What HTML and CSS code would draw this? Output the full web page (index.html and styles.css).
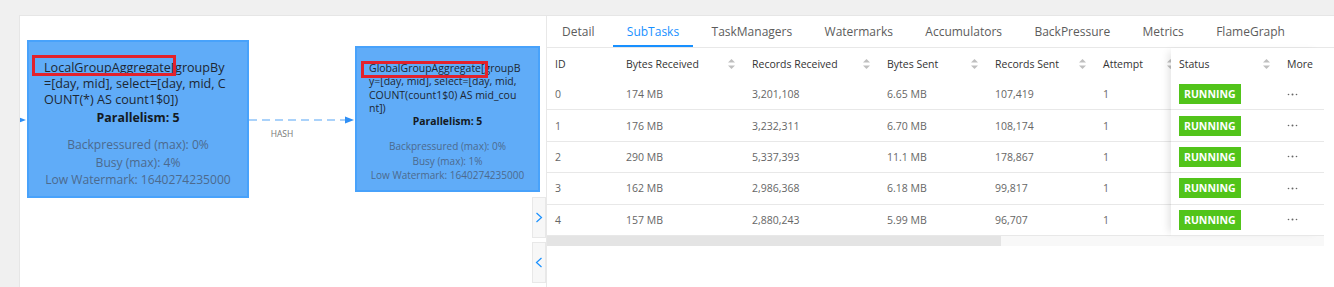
FILE: index.html
```html
<!DOCTYPE html>
<html lang="en">
<head>
    <meta charset="UTF-8">
    <meta name="viewport" content="width=device-width, initial-scale=1.0">
    <title>Job Vertex SubTasks</title>
    <link rel="stylesheet" href="styles.css">
</head>
<body>

    <div class="workspace">
        <div class="graph">
            <svg class="edges" width="526" height="271" viewBox="0 0 526 271">
                <line x1="0" y1="104" x2="3" y2="104" class="edge-line"/>
                <polygon points="-2,101 6,104 -2,107" class="edge-head"/>
                <line x1="229" y1="104" x2="326" y2="104" class="edge-line"/>
                <polygon points="325,100.5 334,104 325,107.5" class="edge-head"/>
                <text x="262" y="121" class="edge-label">HASH</text>
            </svg>

            <div class="node node-local">
                <p class="node-desc">LocalGroupAggregate[groupBy<br>=[day, mid], select=[day, mid, C<br>OUNT(*) AS count1$0])</p>
                <p class="node-para">Parallelism: 5</p>
                <p class="node-stats">Backpressured (max): 0%<br>Busy (max): 4%<br>Low Watermark: 1640274235000</p>
            </div>

            <div class="node node-global">
                <p class="node-desc">GlobalGroupAggregate[groupB<br>y=[day, mid], select=[day, mid,<br>COUNT(count1$0) AS mid_cou<br>nt])</p>
                <p class="node-para">Parallelism: 5</p>
                <p class="node-stats">Backpressured (max): 0%<br>Busy (max): 1%<br>Low Watermark: 1640274235000</p>
            </div>

            <!-- red highlight boxes drawn over the operator names -->
            <span class="mark mark-local"></span>
            <span class="mark mark-global"></span>

            <button class="toggle toggle-expand" type="button">
                <svg width="8" height="11" viewBox="0 0 8 11"><polyline points="1.5,1 6.5,5.5 1.5,10"/></svg>
            </button>
            <button class="toggle toggle-collapse" type="button">
                <svg width="8" height="11" viewBox="0 0 8 11"><polyline points="6.5,1 1.5,5.5 6.5,10"/></svg>
            </button>
        </div>

        <div class="panel">
            <nav class="tabs">
                <span class="tab">Detail</span>
                <span class="tab active">SubTasks</span>
                <span class="tab">TaskManagers</span>
                <span class="tab">Watermarks</span>
                <span class="tab">Accumulators</span>
                <span class="tab">BackPressure</span>
                <span class="tab">Metrics</span>
                <span class="tab">FlameGraph</span>
            </nav>

            <div class="table">
                <div class="table-main">
                    <div class="scroll-cols">
                        <div class="row head">
                            <div class="cell">ID</div>
                            <div class="cell">Bytes Received <svg class="sorter" viewBox="0 0 7 10"><polygon points="0,3.5 3.5,0 7,3.5"/><polygon points="0,6.5 7,6.5 3.5,10"/></svg></div>
                            <div class="cell">Records Received <svg class="sorter" viewBox="0 0 7 10"><polygon points="0,3.5 3.5,0 7,3.5"/><polygon points="0,6.5 7,6.5 3.5,10"/></svg></div>
                            <div class="cell">Bytes Sent <svg class="sorter" viewBox="0 0 7 10"><polygon points="0,3.5 3.5,0 7,3.5"/><polygon points="0,6.5 7,6.5 3.5,10"/></svg></div>
                            <div class="cell">Records Sent <svg class="sorter" viewBox="0 0 7 10"><polygon points="0,3.5 3.5,0 7,3.5"/><polygon points="0,6.5 7,6.5 3.5,10"/></svg></div>
                            <div class="cell">Attempt <svg class="sorter" viewBox="0 0 7 10"><polygon points="0,3.5 3.5,0 7,3.5"/><polygon points="0,6.5 7,6.5 3.5,10"/></svg></div>
                        </div>
                        <div class="row">
                            <div class="cell">0</div><div class="cell">174 MB</div><div class="cell">3,201,108</div><div class="cell">6.65 MB</div><div class="cell">107,419</div><div class="cell">1</div>
                        </div>
                        <div class="row">
                            <div class="cell">1</div><div class="cell">176 MB</div><div class="cell">3,232,311</div><div class="cell">6.70 MB</div><div class="cell">108,174</div><div class="cell">1</div>
                        </div>
                        <div class="row">
                            <div class="cell">2</div><div class="cell">290 MB</div><div class="cell">5,337,393</div><div class="cell">11.1 MB</div><div class="cell">178,867</div><div class="cell">1</div>
                        </div>
                        <div class="row">
                            <div class="cell">3</div><div class="cell">162 MB</div><div class="cell">2,986,368</div><div class="cell">6.18 MB</div><div class="cell">99,817</div><div class="cell">1</div>
                        </div>
                        <div class="row">
                            <div class="cell">4</div><div class="cell">157 MB</div><div class="cell">2,880,243</div><div class="cell">5.99 MB</div><div class="cell">96,707</div><div class="cell">1</div>
                        </div>
                    </div>

                    <div class="fixed-cols">
                        <div class="row head">
                            <div class="cell">Status <svg class="sorter" viewBox="0 0 7 10"><polygon points="0,3.5 3.5,0 7,3.5"/><polygon points="0,6.5 7,6.5 3.5,10"/></svg></div>
                            <div class="cell">More</div>
                        </div>
                        <div class="row"><div class="cell"><span class="badge">RUNNING</span></div><div class="cell"><svg class="more" viewBox="0 0 11 3"><circle cx="1.5" cy="1.5" r="0.8"/><circle cx="5.5" cy="1.5" r="1"/><circle cx="9.5" cy="1.5" r="0.8"/></svg></div></div>
                        <div class="row"><div class="cell"><span class="badge">RUNNING</span></div><div class="cell"><svg class="more" viewBox="0 0 11 3"><circle cx="1.5" cy="1.5" r="0.8"/><circle cx="5.5" cy="1.5" r="1"/><circle cx="9.5" cy="1.5" r="0.8"/></svg></div></div>
                        <div class="row"><div class="cell"><span class="badge">RUNNING</span></div><div class="cell"><svg class="more" viewBox="0 0 11 3"><circle cx="1.5" cy="1.5" r="0.8"/><circle cx="5.5" cy="1.5" r="1"/><circle cx="9.5" cy="1.5" r="0.8"/></svg></div></div>
                        <div class="row"><div class="cell"><span class="badge">RUNNING</span></div><div class="cell"><svg class="more" viewBox="0 0 11 3"><circle cx="1.5" cy="1.5" r="0.8"/><circle cx="5.5" cy="1.5" r="1"/><circle cx="9.5" cy="1.5" r="0.8"/></svg></div></div>
                        <div class="row"><div class="cell"><span class="badge">RUNNING</span></div><div class="cell"><svg class="more" viewBox="0 0 11 3"><circle cx="1.5" cy="1.5" r="0.8"/><circle cx="5.5" cy="1.5" r="1"/><circle cx="9.5" cy="1.5" r="0.8"/></svg></div></div>
                    </div>
                </div>

                <div class="hscroll"><div class="thumb"></div></div>
            </div>
        </div>
    </div>

</body>
</html>
```

FILE: styles.css
```css
/* job graph + subtask table */
body {
    margin: 0;
    height: 287px;
    overflow: hidden;
    background-color: #f0f0f0;
    font-family: "Open Sans", "Noto Sans", sans-serif;
}

p {
    margin: 0;
}

.workspace {
    display: flex;
    height: 271px;
    margin: 15px 0 0 19px;
    border-top: 1px solid #e6e6e6;
    border-left: 1px solid #e6e6e6;
    background-color: #fff;
}

/* ---- graph canvas ---- */
.graph {
    position: relative;
    flex: none;
    width: 526px;
    overflow: hidden;
}

.edges {
    position: absolute;
    left: 0;
    top: 0;
}

.edge-line {
    stroke: #8ec4f9;
    stroke-width: 1.5;
    stroke-dasharray: 8 5;
}

.edge-head {
    fill: #2f8ff5;
}

.edge-label {
    font-family: "Open Sans", sans-serif;
    font-size: 8.5px;
    fill: #777;
    text-anchor: middle;
}

.node {
    position: absolute;
    box-sizing: border-box;
    background-color: #60acf8;
    border: 2px solid #48a2fb;
    color: #1d2733;
}

.node-local {
    left: 7px;
    top: 24px;
    width: 222px;
    height: 158px;
    padding: 18px 10px 0 15px;
}

.node-global {
    left: 335px;
    top: 30px;
    width: 185px;
    height: 146px;
    padding: 14px 8px 0 12px;
}

.node-desc {
    font-size: 12.6px;
    line-height: 16px;
}

.node-para {
    font-size: 12.4px;
    line-height: 16px;
    font-weight: 700;
    text-align: center;
    color: #141a22;
    margin-top: 2px;
    margin-left: -5px;
}

.node-stats {
    font-size: 12.1px;
    line-height: 17.5px;
    text-align: center;
    color: #4c6a8e;
    margin-top: 10px;
    margin-left: -5px;
}

.node-global .node-desc {
    font-size: 10.5px;
    line-height: 13.3px;
}

.node-global .node-para {
    font-size: 10.4px;
    line-height: 13.3px;
    margin-top: 0;
    margin-left: -4px;
}

.node-global .node-stats {
    font-size: 10px;
    line-height: 14.3px;
    margin-top: 11px;
    margin-left: -4px;
}

.mark {
    position: absolute;
    box-sizing: border-box;
    border: 3px solid #e3222c;
}

.mark-local {
    left: 12px;
    top: 39px;
    width: 144px;
    height: 21px;
}

.mark-global {
    left: 341px;
    top: 45px;
    width: 127px;
    height: 17px;
}

.toggle {
    position: absolute;
    left: 512px;
    width: 14px;
    height: 41px;
    padding: 0;
    border: 1px solid #e8e8e8;
    background-color: #f7f7f7;
    display: flex;
    align-items: center;
    justify-content: center;
}

.toggle svg {
    fill: none;
    stroke: #1890ff;
    stroke-width: 1.2;
}

.toggle-expand {
    top: 181px;
}

.toggle-collapse {
    top: 226px;
}

/* ---- right panel ---- */
.panel {
    flex: 1;
    border-left: 1px solid #e8e8e8;
}

.tabs {
    display: flex;
    height: 31px;
    border-bottom: 1px solid #e8e8e8;
}

.tab {
    position: relative;
    padding: 0 16.2px;
    line-height: 31px;
    font-size: 12px;
    color: #5c5c5c;
}

.tab:first-child {
    padding-left: 15px;
}

.tab.active {
    color: #1890ff;
}

.tab.active::after {
    content: "";
    position: absolute;
    left: 2px;
    right: 2px;
    bottom: 0;
    height: 2px;
    background-color: #1890ff;
}

.table {
    width: 777px;
}

.table-main {
    display: flex;
}

.scroll-cols {
    width: 624px;
    overflow: hidden;
}

.fixed-cols {
    position: relative;
    width: 153px;
    background-color: #fff;
    box-shadow: -6px 0 8px -4px rgba(0, 0, 0, 0.12);
}

.row {
    display: grid;
    align-items: center;
    box-sizing: border-box;
    height: 31.4px;
    border-bottom: 1px solid #e8e8e8;
    font-size: 10.5px;
    color: #666;
}

.scroll-cols .row {
    width: 636px;
    grid-template-columns: 71px 126px 135px 108px 108px 88px;
}

.fixed-cols .row {
    grid-template-columns: 108px 45px;
}

.row.head {
    height: 31px;
    border-bottom: 0;
    color: #333;
}

.cell {
    padding: 0 8px;
    white-space: nowrap;
}

.head .cell {
    display: flex;
    align-items: center;
    justify-content: space-between;
}

.sorter {
    width: 7px;
    height: 10px;
    fill: #bfbfbf;
    margin-right: 1px;
}

.badge {
    display: inline-block;
    padding: 0 5px;
    line-height: 20px;
    font-size: 10.5px;
    font-weight: 700;
    color: #fff;
    background-color: #52c41a;
}

.more {
    display: block;
    width: 11px;
    height: 3px;
    fill: #666;
}

.hscroll {
    height: 10px;
    background-color: #f8f8f8;
}

.thumb {
    width: 454px;
    height: 100%;
    background-color: #e4e4e4;
}
```
